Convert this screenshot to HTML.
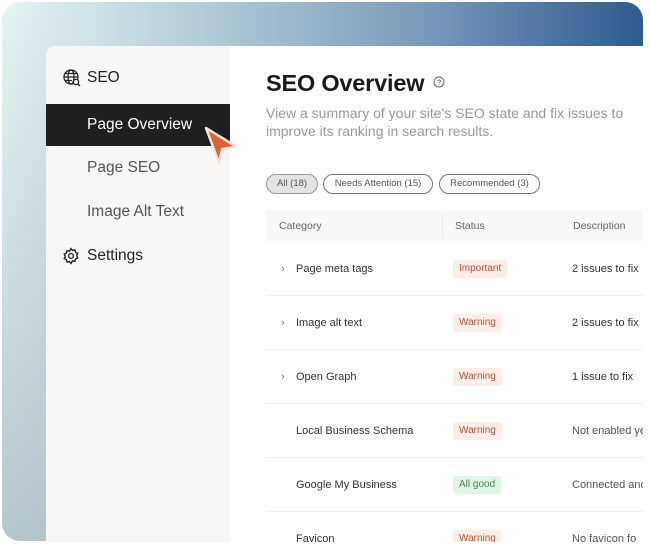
<!DOCTYPE html>
<html><head><meta charset="utf-8">
<style>
*{margin:0;padding:0;box-sizing:border-box}
body{width:650px;height:544px;background:#fff;position:relative;overflow:hidden;font-family:"Liberation Sans",sans-serif}
.card{position:absolute;left:2px;top:2px;width:641px;height:539px;border-radius:18px;overflow:hidden;
background:linear-gradient(90deg,#e6f4f4 0%,#b5cdd8 30%,#7a9cbc 65%,#2f5a8f 100%)}
.card:after{content:"";position:absolute;left:0;top:0;width:60px;height:100%;background:linear-gradient(180deg,rgba(230,244,244,0) 0%,rgba(160,180,188,.7) 100%)}
.panel{position:absolute;left:46px;top:46px;width:597px;height:496px;background:#fff;border-top-left-radius:9px;overflow:hidden;z-index:2}
.side{position:absolute;left:0;top:0;width:184px;height:100%;background:#f8f7f6}
.si{position:absolute;font-size:15.5px;color:#555}
.sel{position:absolute;left:0;top:58px;width:184px;height:42px;background:#1f1f1f}
.main{position:absolute;left:220px;top:0;width:400px}
h1{position:absolute;left:0;top:24px;font-size:23.5px;font-weight:bold;color:#1a1a1a;white-space:nowrap;letter-spacing:-.2px}
.sub{position:absolute;left:0;top:58px;width:370px;font-size:14px;line-height:18px;color:#999}
.pill{position:absolute;top:128px;height:20px;border:1px solid #777;border-radius:10px;font-size:9.5px;color:#555;line-height:18px;text-align:center}
.hdr{position:absolute;left:0;top:164px;width:380px;height:32px;background:#f8f8f8;font-size:10.5px;color:#666}
.row{position:absolute;left:0;width:380px;height:54px;border-bottom:1px solid #eee;font-size:11px;color:#333}
.row span{position:absolute;top:21px;white-space:nowrap}
.b{position:absolute;top:18px;left:187px;height:18px;padding:0 6px;border-radius:3px;font-size:10px;line-height:18px}
.w{background:#fcede8;color:#b0553a}
.g{background:#e3f4e8;color:#3f8a55}
</style></head><body>
<div class="card"></div>
<div class="panel">
 <div class="side">
  <svg style="position:absolute;left:17px;top:23px" width="18" height="18" viewBox="0 0 18 18" fill="none" stroke="#222" stroke-width="1.3"><circle cx="8" cy="8" r="7"/><ellipse cx="8" cy="8" rx="3" ry="7"/><path d="M1 8h14M2 4.5h12M2 11.5h7"/><circle cx="13" cy="13" r="2.6" fill="#f8f7f6"/><path d="M15 15l2 2"/></svg>
  <div class="si" style="left:41px;top:23px;color:#222">SEO</div>
  <div class="sel"></div>
  <div class="si" style="left:41px;top:70px;color:#fff">Page Overview</div>
  <div class="si" style="left:41px;top:113px">Page SEO</div>
  <div class="si" style="left:41px;top:157px">Image Alt Text</div>
  <svg style="position:absolute;left:16px;top:201px" width="18" height="18" viewBox="0 0 24 24" fill="none" stroke="#222" stroke-width="1.8"><circle cx="12" cy="12" r="3.2"/><path d="M12 2l2 2.6 3.2-.8.8 3.2L21 8.5l-1.4 3 1.4 3-3 1.5-.8 3.2-3.2-.8L12 22l-2-2.6-3.2.8-.8-3.2L3 15.5l1.4-3-1.4-3 3-1.5.8-3.2 3.2.8z"/></svg>
  <div class="si" style="left:41px;top:201px;color:#222">Settings</div>
 </div>
 <svg style="position:absolute;left:156px;top:78px;z-index:5" width="40" height="42" viewBox="0 0 40 42"><path d="M4 4 L35 23 L20 25 L17 39 Z" fill="#e0623a" stroke="#f5e6dc" stroke-width="2.5" stroke-linejoin="round"/></svg>
 <div class="main">
  <h1>SEO Overview <svg width="12" height="12" viewBox="0 0 12 12" style="vertical-align:3px;margin-left:2px"><circle cx="6" cy="6" r="5" fill="none" stroke="#666" stroke-width="1"/><text x="6" y="8.7" font-size="7" text-anchor="middle" fill="#666" font-family="Liberation Sans">?</text></svg></h1>
  <div class="sub">View a summary of your site's SEO state and fix issues to improve its ranking in search results.</div>
  <div class="pill" style="left:0;width:52px;background:#e2e4e6;border-color:#999">All (18)</div>
  <div class="pill" style="left:57px;width:110px">Needs Attention (15)</div>
  <div class="pill" style="left:173px;width:101px">Recommended (3)</div>
  <div class="hdr"><span style="position:absolute;left:13px;top:10px">Category</span><span style="position:absolute;left:176px;top:4px;width:1px;height:24px;background:#e8e8e8"></span><span style="position:absolute;left:189px;top:10px">Status</span><span style="position:absolute;left:307px;top:10px">Description</span></div>
  <div class="row" style="top:196px"><span style="left:15px;color:#777">›</span><span style="left:30px">Page meta tags</span><div class="b w">Important</div><span style="left:306px">2 issues to fix</span></div>
  <div class="row" style="top:250px"><span style="left:15px;color:#777">›</span><span style="left:30px">Image alt text</span><div class="b w">Warning</div><span style="left:306px">2 issues to fix</span></div>
  <div class="row" style="top:304px"><span style="left:15px;color:#777">›</span><span style="left:30px">Open Graph</span><div class="b w">Warning</div><span style="left:306px">1 issue to fix</span></div>
  <div class="row" style="top:358px"><span style="left:30px">Local Business Schema</span><div class="b w">Warning</div><span style="left:306px;color:#555">Not enabled yet</span></div>
  <div class="row" style="top:412px"><span style="left:30px">Google My Business</span><div class="b g">All good</div><span style="left:306px;color:#555">Connected and</span></div>
  <div class="row" style="top:466px"><span style="left:30px">Favicon</span><div class="b w">Warning</div><span style="left:306px;color:#555">No favicon fo</span></div>
 </div>
</div>
</body></html>
